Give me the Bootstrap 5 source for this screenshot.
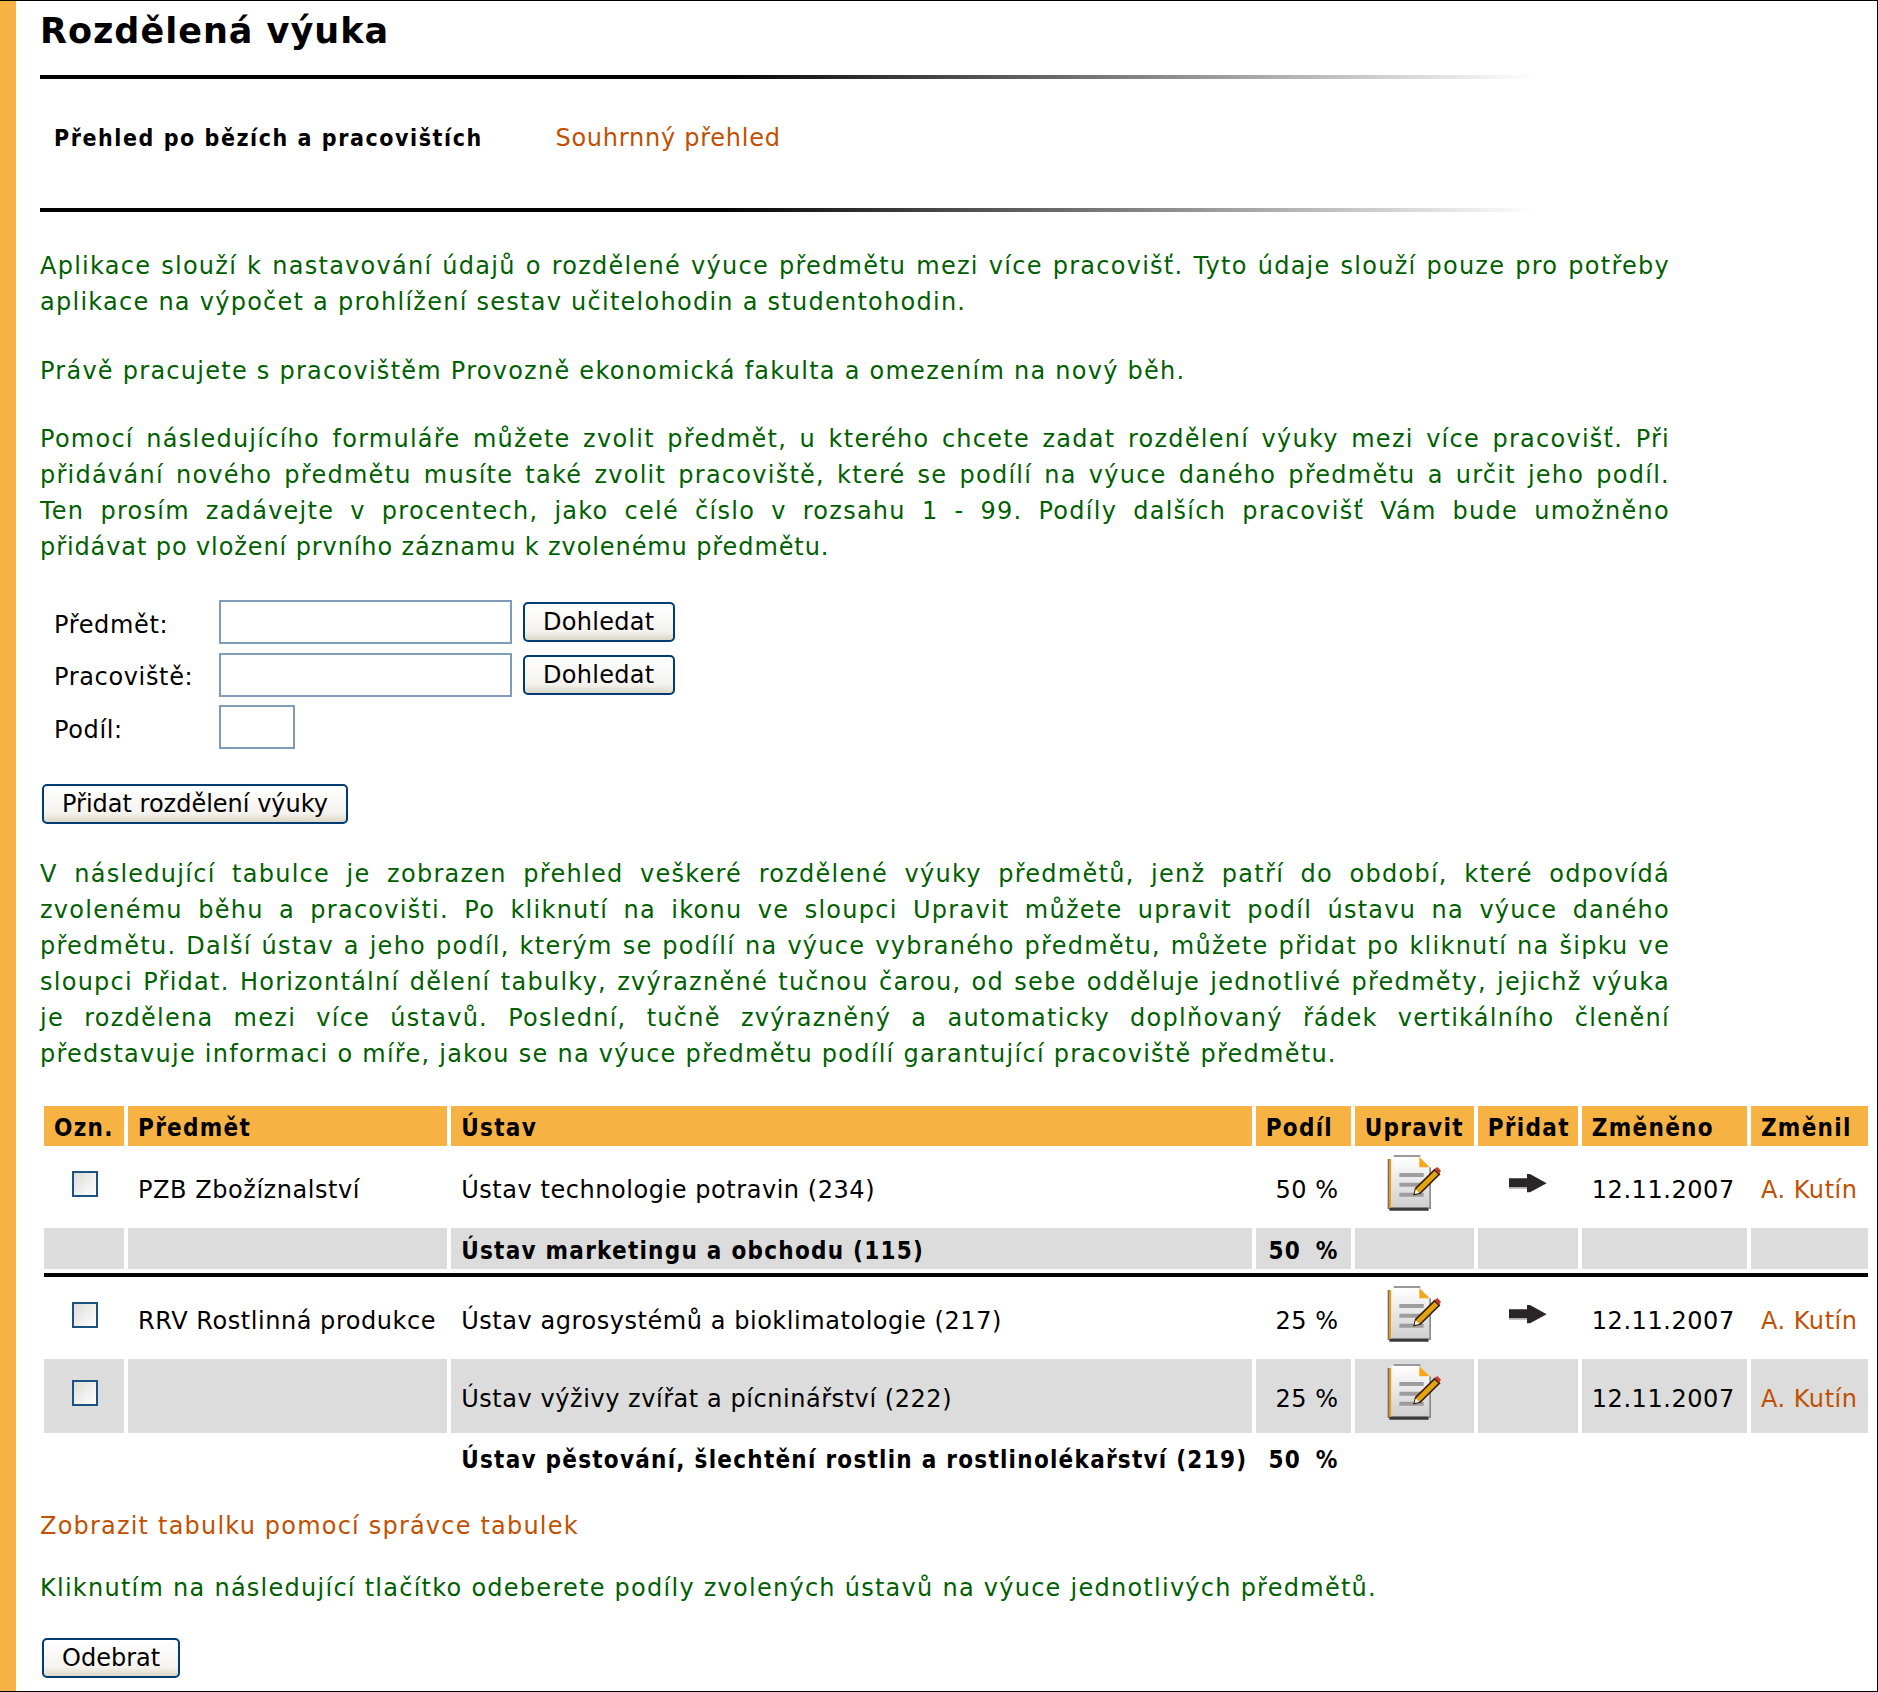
<!DOCTYPE html>
<html lang="cs">
<head>
  <meta charset="UTF-8" />
  <title>Rozdělená výuka</title>
  <link href="https://cdn.jsdelivr.net/npm/bootstrap@5.3.3/dist/css/bootstrap.min.css" rel="stylesheet"/>
  <style>
    body { background: #fff; font-family: "DejaVu Sans", Verdana, sans-serif; font-size: 24px; line-height: 36px; color: #000; }
    .ramec { min-height: 1692px; border: 1px solid #000; border-left: 0; }
    .okraj { width: 16px; background: #f6b242; flex: none; }
    .obsah { padding-left: 24px; width: 1861px; }
    h1.nadpis { font-family: inherit; font-size: 35px; font-weight: 700; line-height: 50px; margin: 5px 0 19px; letter-spacing: 1px; }
    .cara { width: 1495px; height: 4px; background: linear-gradient(to right, #000 0, #000 45%, #fff 100%); }
    .zalozky { padding: 41px 0 52px 14px; }
    .zalozky b, th, .tucne { font-weight: 700; font-stretch: condensed; letter-spacing: 1.3px; }
    .zalozky b { font-size: 23px; letter-spacing: 1.55px; margin-right: 65px; }
    .zalozky a { letter-spacing: .75px; }
    a { color: #c15000; text-decoration: none; letter-spacing: 1.2px; }
    .text { color: #005f00; width: 1630px; margin: 0; text-align: justify; letter-spacing: 1.26px; }
    .prvni { margin-top: 36px; }
    .druhy { margin-top: 33px; }
    .treti { margin-top: 32px; word-spacing: 2.5px; }
    .treti span { word-spacing: 0; letter-spacing: .9px; }
    .ctvrty { margin-top: 32px; }
    .formular { padding-left: 14px; margin: 35px 0 35px; letter-spacing: .65px; gap: 8.5px; }
    .formular label { width: 165px; flex: none; margin: 0; padding-top: 5px; }
    .pole { border: 2px solid #7f9db9; border-radius: 0; height: 44px; width: 293px; padding: 0 4px; font-size: 24px; }
    .pole-male { width: 76px; }
    .tlac { border: 2px solid #003c74; border-radius: 5px; height: 40px; padding: 0 18px; font-size: 24px; line-height: 32px; color: #000;
      background: linear-gradient(to bottom, #fff 0, #f4f3ee 75%, #dcd8c8 100%); }
    .tlac:hover { border-color: #003c74; color: #000; }
    .tlac-odsad { margin-left: 2px; }
    .tlac-vedle { margin-left: 11px; letter-spacing: .3px; }
    .prehled { table-layout: fixed; width: 1832px; border-collapse: separate; border-spacing: 4px; margin: 30px 0 26px; }
    .prehled th { background: #f6b242; height: 40px; padding: 4px 10px 0; line-height: 32px; white-space: nowrap; }
    .prehled td { height: 74px; padding: 5px 10px 0; white-space: nowrap; letter-spacing: .55px; }
    .prehled td a { letter-spacing: .55px; }
    .prehled tr.seda td { background: #dcdcdc; }
    .prehled tr.nizky td { height: 41px; padding-top: 5px; line-height: 30px; }
    .prehled td.tucne { letter-spacing: 1.25px; }
    .prehled td.cislo { text-align: right; padding-right: 12px; }
    .prehled td.cislo.tucne { word-spacing: 6px; }
    .prehled td.ikona { padding: 0 0 8px; }
    .prehled td.stred { padding: 0 0 0 2px; text-align: center; }
    .prehled tr.delic td { height: 4px; padding: 0; background: #000; }
    .s1 { width: 80px; } .s2 { width: 319px; } .s3 { width: 800px; } .s4 { width: 95px; }
    .s5 { width: 119px; } .s6 { width: 100px; } .s7 { width: 165px; } .s8 { width: 117px; }
    .zatrh { appearance: none; display: block; width: 26px; height: 26px; margin: 0 auto 6px; border: 2px solid #1c5180;
      background: linear-gradient(135deg, #dcdcd7 0, #fff 100%); }
    .ikona svg { display: block; margin: 0 auto; }
    .spodni { margin: 26px 0 32px; }
  </style>
</head>
<body>
  <div class="ramec d-flex">
    <div class="okraj"></div>
    <div class="obsah">
      <h1 class="nadpis">Rozdělená výuka</h1>
      <div class="cara"></div>
      <div class="zalozky"><b>Přehled po bězích a pracovištích</b> <a href="#">Souhrnný přehled</a></div>
      <div class="cara"></div>

      <p class="text prvni">Aplikace slouží k nastavování údajů o rozdělené výuce předmětu mezi více pracovišť. Tyto údaje slouží pouze pro potřeby aplikace na výpočet a prohlížení sestav učitelohodin a studentohodin.</p>
      <p class="text druhy">Právě pracujete s pracovištěm Provozně ekonomická fakulta a omezením na nový běh.</p>
      <p class="text treti">Pomocí následujícího formuláře můžete zvolit předmět, u kterého chcete zadat rozdělení výuky mezi více pracovišť. Při přidávání nového předmětu musíte také zvolit pracoviště, které se podílí na výuce daného předmětu a určit jeho podíl. Ten prosím zadávejte v procentech, jako celé číslo v rozsahu 1 - 99. Podíly dalších pracovišť Vám bude umožněno <span>přidávat po vložení prvního záznamu k zvolenému předmětu.</span></p>

      <form class="formular d-flex flex-column" onsubmit="return false">
        <div class="d-flex align-items-center">
          <label>Předmět:</label>
          <input type="text" class="form-control pole">
          <button class="btn tlac tlac-vedle">Dohledat</button>
        </div>
        <div class="d-flex align-items-center">
          <label>Pracoviště:</label>
          <input type="text" class="form-control pole">
          <button class="btn tlac tlac-vedle">Dohledat</button>
        </div>
        <div class="d-flex align-items-center">
          <label>Podíl:</label>
          <input type="text" class="form-control pole pole-male">
        </div>
      </form>

      <button class="btn tlac tlac-odsad d-block">Přidat rozdělení výuky</button>

      <p class="text ctvrty">V následující tabulce je zobrazen přehled veškeré rozdělené výuky předmětů, jenž patří do období, které odpovídá zvolenému běhu a pracovišti. Po kliknutí na ikonu ve sloupci Upravit můžete upravit podíl ústavu na výuce daného předmětu. Další ústav a jeho podíl, kterým se podílí na výuce vybraného předmětu, můžete přidat po kliknutí na šipku ve sloupci Přidat. Horizontální dělení tabulky, zvýrazněné tučnou čarou, od sebe odděluje jednotlivé předměty, jejichž výuka je rozdělena mezi více ústavů. Poslední, tučně zvýrazněný a automaticky doplňovaný řádek vertikálního členění představuje informaci o míře, jakou se na výuce předmětu podílí garantující pracoviště předmětu.</p>

      <table class="prehled">
        <colgroup>
          <col class="s1"><col class="s2"><col class="s3"><col class="s4"><col class="s5"><col class="s6"><col class="s7"><col class="s8">
        </colgroup>
        <thead>
          <tr><th>Ozn.</th><th>Předmět</th><th>Ústav</th><th>Podíl</th><th>Upravit</th><th>Přidat</th><th>Změněno</th><th>Změnil</th></tr>
        </thead>
        <tbody>
          <tr>
            <td class="stred"><input type="checkbox" class="zatrh"></td>
            <td>PZB Zbožíznalství</td>
            <td>Ústav technologie potravin (234)</td>
            <td class="cislo">50 %</td>
            <td class="ikona"><svg width="55" height="56" viewBox="50 48 165 168"><use href="#poznamka"/></svg></td>
            <td class="ikona"><svg width="38" height="19" viewBox="420 100 114 57"><use href="#sipka"/></svg></td>
            <td>12.11.2007</td>
            <td><a href="#">A. Kutín</a></td>
          </tr>
          <tr class="seda nizky">
            <td></td><td></td>
            <td class="tucne">Ústav marketingu a obchodu (115)</td>
            <td class="cislo tucne">50 %</td>
            <td></td><td></td><td></td><td></td>
          </tr>
          <tr class="delic"><td colspan="8"></td></tr>
          <tr>
            <td class="stred"><input type="checkbox" class="zatrh"></td>
            <td>RRV Rostlinná produkce</td>
            <td>Ústav agrosystémů a bioklimatologie (217)</td>
            <td class="cislo">25 %</td>
            <td class="ikona"><svg width="55" height="56" viewBox="50 48 165 168"><use href="#poznamka"/></svg></td>
            <td class="ikona"><svg width="38" height="19" viewBox="420 100 114 57"><use href="#sipka"/></svg></td>
            <td>12.11.2007</td>
            <td><a href="#">A. Kutín</a></td>
          </tr>
          <tr class="seda">
            <td class="stred"><input type="checkbox" class="zatrh"></td>
            <td></td>
            <td>Ústav výživy zvířat a pícninářství (222)</td>
            <td class="cislo">25 %</td>
            <td class="ikona"><svg width="55" height="56" viewBox="50 48 165 168"><use href="#poznamka"/></svg></td>
            <td></td>
            <td>12.11.2007</td>
            <td><a href="#">A. Kutín</a></td>
          </tr>
          <tr class="nizky">
            <td></td><td></td>
            <td class="tucne">Ústav pěstování, šlechtění rostlin a rostlinolékařství (219)</td>
            <td class="cislo tucne">50 %</td>
            <td></td><td></td><td></td><td></td>
          </tr>
        </tbody>
      </table>

      <a href="#" class="d-block">Zobrazit tabulku pomocí správce tabulek</a>
      <p class="text spodni">Kliknutím na následující tlačítko odeberete podíly zvolených ústavů na výuce jednotlivých předmětů.</p>
      <button class="btn tlac tlac-odsad d-block">Odebrat</button>
    </div>
  </div>

  <!-- ikony -->
  <svg width="0" height="0" class="position-absolute">
    <defs>
      <linearGradient id="list" x1="0" y1="0" x2="0" y2="1">
        <stop offset="0" stop-color="#fff"/><stop offset="1" stop-color="#cfcfcf"/>
      </linearGradient>
      <g id="poznamka">
        <path d="M52 60h6v150h-6z" fill="#6e6e6e"/>
        <path d="M57 205h118v10H57z" fill="#3a3a3a"/>
        <path d="M175 85h7v125h-7z" fill="#8a8a8a"/>
        <path d="M70 48h80v6H70z" fill="#9a9a9a"/>
        <path d="M57 60h6v147h-6z" fill="#f59a00"/>
        <path d="M63 54h84l30 31v120H63z" fill="url(#list)"/>
        <path d="M147 54l31 31h-31z" fill="#f9a51a"/>
        <path d="M87 102h73v12H87zM87 131h73v12H87zM87 161h73v12H87z" fill="#9d9d9d"/>
        <path d="M132 166l4-18 57-56 14 14-57 56z" fill="#e0a512" stroke="#3a1d00" stroke-width="5"/>
        <path d="M133 165l3-14 11 11z" fill="#fff"/>
        <path d="M193 90l8-6 11 11-6 9z" fill="#c63a2a"/>
      </g>
      <g id="sipka">
        <path d="M420 113h54v-13h9l50 28-50 27h-9v-15h-54z" fill="#2b2527"/>
        <path d="M420 140h54v4h-54z" fill="#a5a5a5"/>
      </g>
    </defs>
  </svg>
  <script src="https://cdn.jsdelivr.net/npm/bootstrap@5.3.3/dist/js/bootstrap.bundle.min.js"></script>
</body>
</html>
